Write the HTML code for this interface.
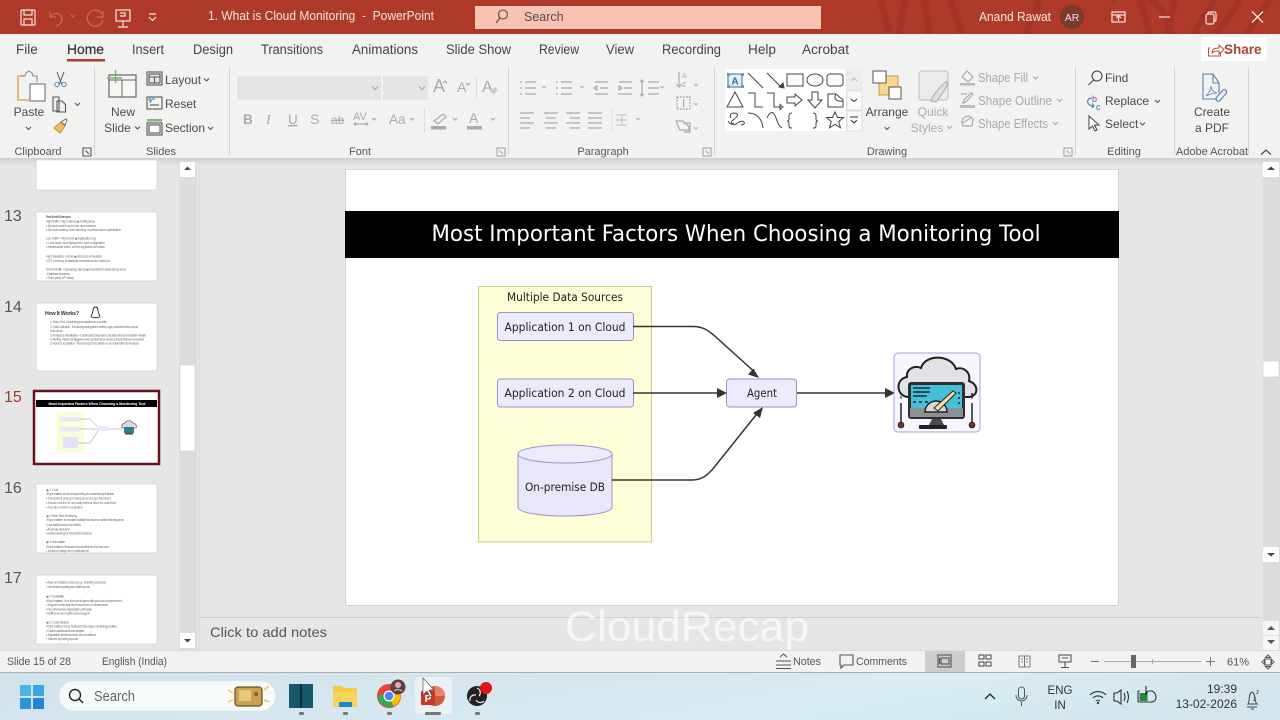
<!DOCTYPE html>
<html><head><meta charset="utf-8"><style>
html,body{margin:0;padding:0;width:1280px;height:720px;overflow:hidden;background:#e6e6e6}
svg{display:block;font-family:"Liberation Sans",sans-serif}
.t{fill:#4a4a4a;font-size:12px}
.tab{fill:#444;font-size:13.5px}
.grp{fill:#555;font-size:11px;text-anchor:middle}
.dis{fill:#aaa;font-size:12.5px}
.ic{fill:none;stroke:#555;stroke-width:1.1}
.icd{fill:none;stroke:#aaa;stroke-width:1.2}
.sh{fill:none;stroke:#444;stroke-width:1}
.d{font-family:"DejaVu Sans",sans-serif;font-size:11.6px;fill:#222;text-anchor:middle}
.th{font-size:3.2px;fill:#777}
.num{font-size:16px;fill:#555}
.wh{fill:none;stroke:#f3e4df;stroke-width:1.2}
</style></head><body>
<svg width="1280" height="720" viewBox="0 0 1280 720" xmlns="http://www.w3.org/2000/svg">
<defs>
<linearGradient id="tb" x1="0" x2="1" y1="0" y2="0.2"><stop offset="0" stop-color="#cfe2ec"/><stop offset=".45" stop-color="#d6e7ef"/><stop offset=".75" stop-color="#d8edf2"/><stop offset="1" stop-color="#d3e6f0"/></linearGradient>
<linearGradient id="shd" x1="0" x2="0" y1="0" y2="1"><stop offset="0" stop-color="#cfcfcf"/><stop offset="1" stop-color="#e6e6e6"/></linearGradient>
</defs>
<rect width="1280" height="720" fill="#e6e6e6"/>
<!-- title bar -->
<rect width="1280" height="34" fill="#b03a2a"/>
<g stroke="#a03324" stroke-width="7" opacity=".75" fill="none">
<path d="M880 0l10 34M905 0l-6 34M925 0l4 34M950 0l12 34M1040 0l-14 34M1140 0l10 34M1175 0l-8 34M1215 0l-22 34M1240 0l-24 34M1270 0l-24 34"/>
<path d="M1110 0a40 40 0 0 1 60 34"/>
</g>
<g class="wh"><rect x="21" y="10" width="14" height="15" rx="1"/><path d="M24 10v5h8v-5M24 25v-6h8v6"/></g>
<g fill="none" stroke="#c9695b" stroke-width="1.3"><path d="M50 11v6h6M50 17c4-6 13-4 12 3-.5 3-3 5-6 6"/><path d="M71 15l2 2 2-2" stroke-width="1"/><path d="M103 11v6h-6M102 14a8 8 0 1 0 1 6"/></g>
<g class="wh"><rect x="116" y="10" width="14" height="11"/><path d="M123 21v5M118 27h10M120 13h5v3h-5"/></g>
<path d="M149 14h7M149 17l3.500 3.500 3.500-3.500" fill="none" stroke="#f3e4df" stroke-width="1.200"/>
<text x="208" y="20" font-size="12.500" fill="#f6e6e2" textLength="226" lengthAdjust="spacingAndGlyphs" xml:space="preserve">1. What is Cloud Monitoring  -  PowerPoint</text>
<rect x="475" y="6" width="346" height="23" fill="#f8c2b4"/>
<circle cx="503" cy="14.500" r="4.500" fill="none" stroke="#553" stroke-width="1.100"/><path d="M500 18l-4 5" stroke="#553" stroke-width="1.200"/>
<text x="524" y="21" font-size="12.500" fill="#5a4a46">Search</text>
<text x="979" y="21" font-size="12.500" fill="#f6e6e2" textLength="72" lengthAdjust="spacingAndGlyphs">Anand Rawat</text>
<circle cx="1072" cy="17" r="12" fill="#7a3a30"/><text x="1072" y="21" font-size="10.500" fill="#f1e0dc" text-anchor="middle">AR</text>
<g class="wh"><rect x="1112" y="12" width="13" height="10"/><path d="M1112 15h13M1118.500 21v-5M1116 18l2.500-2.500 2.500 2.500"/></g>
<path d="M1159 17h11" stroke="#f3e4df" stroke-width="1.200"/>
<g class="wh"><rect x="1206" y="14" width="8" height="10" rx="2"/><path d="M1208 14v-1q0-1 1-1h5q2 0 2 2v6q0 1-2 1"/></g>
<path d="M1252 11.500l11 11M1263 11.500l-11 11" stroke="#f6e8e4" stroke-width="1.300"/>

<!-- ribbon -->
<rect y="34" width="1280" height="126" fill="#f2f3f1"/>
<rect y="158" width="1280" height="8" fill="url(#shd)"/>
<g class="tab">
<text x="16" y="54">File</text>
<text x="67" y="54" fill="#333" stroke="#333" stroke-width=".25" textLength="37" lengthAdjust="spacingAndGlyphs">Home</text>
<text x="132" y="54" textLength="32" lengthAdjust="spacingAndGlyphs">Insert</text>
<text x="193" y="54" textLength="40" lengthAdjust="spacingAndGlyphs">Design</text>
<text x="261" y="54" textLength="62" lengthAdjust="spacingAndGlyphs">Transitions</text>
<text x="352" y="54" textLength="66" lengthAdjust="spacingAndGlyphs">Animations</text>
<text x="446" y="54" textLength="65" lengthAdjust="spacingAndGlyphs">Slide Show</text>
<text x="539" y="54" textLength="40" lengthAdjust="spacingAndGlyphs">Review</text>
<text x="606" y="54" textLength="28" lengthAdjust="spacingAndGlyphs">View</text>
<text x="662" y="54" textLength="59" lengthAdjust="spacingAndGlyphs">Recording</text>
<text x="748" y="54" textLength="28" lengthAdjust="spacingAndGlyphs">Help</text>
<text x="802" y="54" textLength="47" lengthAdjust="spacingAndGlyphs">Acrobat</text>
</g>
<rect x="67" y="59" width="38" height="2.500" fill="#ac3b2a"/>
<rect x="1201" y="37" width="66" height="24" rx="2" fill="#fff"/>
<path d="M1210 48h-1.500v8h12v-4M1212 53c0-4 3-5 7-5v-3l5 4.500-5 4.500v-3c-3 0-5 0-7 2z" fill="none" stroke="#b5513f" stroke-width="1"/>
<text x="1224" y="54" font-size="13.500" font-weight="bold" fill="#a84533">Share</text>

<!-- separators -->
<path d="M94.500 67v88M229.500 67v88M508.500 67v88M714.500 67v88M1075.500 67v88M1174.500 67v88M1248.500 67v88" stroke="#d2d2d0"/>

<!-- Clipboard -->
<path d="M25 76h-7v24h11" fill="none" stroke="#e0ac50" stroke-width="1.500"/>
<path d="M21 76h4l1-3 3-2 3 2 1 3h4v6" fill="#f4f4f2" stroke="#888"/>
<rect x="30" y="84" width="15" height="17" fill="#fff" stroke="#666"/>
<text x="29" y="116" class="t" text-anchor="middle">Paste</text>
<path d="M26 127l2.500 2.500 2.500-2.500" class="ic"/>
<g fill="none" stroke="#555"><path d="M57 72l5 13M64 72l-5 13"/></g>
<g fill="none" stroke="#4b89b8"><circle cx="57" cy="84.500" r="2.200"/><circle cx="64" cy="84.500" r="2.200"/></g>
<g class="ic"><path d="M53 97h6v14h-6zM57 101h5l3.500 3.500v7.500h-8.500z" fill="#f2f3f1"/><path d="M75 103l2.500 2.500 2.500-2.500"/></g>
<path d="M54 128l7-6 4 4-5 7z" fill="#f0bc60" stroke="#d18a25"/>
<path d="M61 122l5-3 1 1-2 5z" fill="#fff" stroke="#555" stroke-width=".8"/>
<text x="38" y="155" class="grp">Clipboard</text>
<path d="M83 148h8v8h-8zM85.500 150.500l3.500 3.500" class="ic" stroke-width=".8"/>

<!-- Slides -->
<rect x="109" y="75" width="27" height="22" fill="#f6f6f4" stroke="#666" stroke-width="1.200"/><path d="M109 80h27M122 80v17" stroke="#666"/>
<path d="M115.500 70v13M107 78h15" stroke="#6fb36f" stroke-width="1.400"/>
<text x="123" y="116" class="t" text-anchor="middle">New</text>
<text x="117.500" y="132" class="t" text-anchor="middle">Slide</text><path d="M135 126.500l2.500 2.500 2.500-2.500" class="ic"/>
<g class="ic"><rect x="147" y="72" width="15" height="13"/><rect x="149" y="74" width="11" height="9" fill="#e6e6e4"/><path d="M149 77h11M154.500 77v6"/>
<rect x="147" y="97" width="15" height="12"/><path d="M150 103a4 4 0 0 1 5-4M151 97l-2 2.500 2.500 2" stroke="#4b89b8"/><path d="M150 105h9"/>
<rect x="147" y="123" width="15" height="12"/><rect x="149" y="125" width="11" height="8" fill="#fff"/></g>
<rect x="147" y="119" width="15" height="2.500" fill="#7fb27f"/>
<text x="165" y="84" class="t">Layout</text><path d="M204 78.500l2.500 2.500 2.500-2.500" class="ic"/>
<text x="165" y="108" class="t">Reset</text>
<text x="165" y="132" class="t">Section</text><path d="M208 127l2.500 2.500 2.500-2.500" class="ic"/>
<text x="161" y="155" class="grp">Slides</text>

<!-- Font -->
<rect x="237" y="76" width="144" height="24" fill="#e4e4e2"/><rect x="383" y="76" width="45" height="24" fill="#e4e4e2"/><rect x="381" y="76" width="2" height="24" fill="#f2f3f1"/>
<path d="M372 86.500l3 3 3-3M419 86.500l3 3 3-3" class="icd"/>
<g font-size="14" fill="#aaa">
<text x="433" y="92" font-size="18">A</text><path d="M443 83l2-2 2 2" class="icd" stroke-width=".8"/>
<text x="457" y="92" font-size="14">A</text><path d="M466 83l2 2 2-2" class="icd" stroke-width=".8"/>
<path d="M476.500 76v22" stroke="#ddd"/>
<text x="482" y="92" font-size="16">A</text><path d="M490 92l5-5 3 3-4 4z" fill="#ccc"/>
<text x="243" y="124" font-weight="bold" font-size="13.500">B</text>
<text x="266" y="124" font-style="italic" font-family="Liberation Serif" font-size="14">I</text>
<text x="288" y="124" font-size="13.500" text-decoration="underline">U</text>
<text x="310" y="124" font-size="14">S</text>
<text x="331" y="124" font-size="12" text-decoration="line-through">ab</text>
<text x="353" y="120" font-size="11">AV</text><path d="M354 124h14M354 124l2-1.500M354 124l2 1.500M368 124l-2-1.500M368 124l-2 1.500" class="icd" stroke-width=".7"/><path d="M372 118l2 2 2-2" class="icd" stroke-width=".9"/>
<text x="389" y="124" font-size="13.500">Aa</text><path d="M410 118l2 2 2-2" class="icd" stroke-width=".9"/>
</g>
<path d="M424.500 108v24" stroke="#ddd"/>
<path d="M434 121l9-7 3 3-8 7z" class="icd"/><rect x="431" y="126" width="15" height="3.500" fill="#aaa"/><path d="M453 118l2 2 2-2M491 118l2 2 2-2" class="icd" stroke-width=".9"/>
<text x="469" y="123" font-size="14" fill="#aaa">A</text><rect x="467" y="126" width="15" height="3.500" fill="#aaa"/>
<text x="360" y="155" class="grp">Font</text>
<path d="M497 148h8v8h-8zM499.500 150.500l3.500 3.500" class="icd" stroke-width=".8"/>

<!-- Paragraph -->
<g class="icd">
<path d="M525 82h11M525 88h11M525 94h11M520 82h2M520 88h2M520 94h2"/><path d="M542 86l2 2 2-2M580 86l2 2 2-2M660 86l2 2 2-2M694 84l2 2 2-2M694 103l2 2 2-2M694 127l2 2 2-2" stroke-width=".9"/>
<path d="M561 82h11M561 88h11M561 94h11M556 82h2M556 88h2M556 94h2"/>
<path d="M595 82h13M600 88h8M595 94h13M594 88l3-2v4z"/><path d="M619 82h13M624 88h8M618 94h14M622 88l-3-2v4z"/>
<path d="M648 82h11M648 88h11M648 94h11M642 80v16M640 82l2-2 2 2M640 94l2 2 2-2"/>
<path d="M520 113h14M520 118h10M520 123h14M520 128h10"/><path d="M544 113h14M546 118h10M544 123h14M546 128h10"/><path d="M566 113h14M570 118h10M566 123h14M570 128h10"/><path d="M588 113h14M588 118h14M588 123h14M588 128h14"/>
<path d="M616 115h11M616 120h11M616 125h11M622 115v10" stroke-width=".8"/><path d="M636 118l2 2 2-2" stroke-width=".9"/>
<path d="M679 72v15M676 84l3 3 3-3"/>
<rect x="677" y="97" width="13" height="12" stroke-dasharray="2 1"/><path d="M683.500 99v8"/>
<path d="M676 121h7l6 6v3h-9zM683 123h7v9h-6"/>
</g>
<text x="682" y="78" font-size="7" fill="#aaa">A</text><text x="682" y="87" font-size="7" fill="#aaa">Z</text>
<path d="M612 109v22" stroke="#ddd"/>
<text x="603" y="155" class="grp">Paragraph</text>
<path d="M703 148h8v8h-8zM705.500 150.500l3.500 3.500" class="icd" stroke-width=".8"/>

<!-- Shapes gallery -->
<rect x="725" y="69" width="137" height="62" fill="#e8e8e6"/>
<rect x="725" y="69" width="121" height="62" fill="#fff"/>
<rect x="847" y="69" width="15" height="21" fill="#ececea"/><rect x="847" y="91" width="15" height="19" fill="#fafafa" stroke="#ccc" stroke-width=".5"/><rect x="847" y="111" width="15" height="20" fill="#fafafa" stroke="#ccc" stroke-width=".5"/>
<path d="M851 81l3-3 3 3" fill="none" stroke="#bbb"/><path d="M851 99l3 2.500 3-2.500" fill="none" stroke="#333"/><path d="M850 117h8M851 120l3 3 3-3" fill="none" stroke="#333"/>
<rect x="728" y="74" width="14" height="13" fill="#e3eef5" stroke="#2f6f95"/><g fill="#5ba0c4"><rect x="727" y="73" width="3" height="3"/><rect x="741" y="73" width="3" height="3"/><rect x="727" y="85" width="3" height="3"/><rect x="741" y="85" width="3" height="3"/></g><text x="735" y="84.500" font-size="10" fill="#2f6f95" font-weight="bold" text-anchor="middle">A</text>
<g class="sh">
<path d="M748 73l15 15M767 73l15 15"/><path d="M784 88l-1-5-4 4z" fill="#444"/>
<rect x="787" y="74" width="16" height="12"/><ellipse cx="815" cy="80" rx="8" ry="6"/><rect x="827" y="74" width="16" height="12" rx="3"/>
<path d="M735 92l8 15h-16z"/>
<path d="M748 93h7v14h8M767 93h7v14h7M783 107l-3-2.500v5z"/>
<path d="M787 97h8v-3l7 6-7 6v-3h-8z"/><path d="M812 92h6v8h4l-7 8-7-8h4z"/>
<path d="M828 94h8l7 6v7h-15z"/><path d="M836 94c-3 5 1 8 7 7"/>
<path d="M731 118c-3-5 4-6 6-4s-3 5-5 7 1 5 4 3 6-4 8-2-3 3-3 3M728 121c2 3 4 4 6 2"/>
<path d="M748 113c8 0 14 5 15 15M767 118c2-5 5-7 7-4 3 4 3 11 8 14"/>
<path d="M792 113c-2 0-3 1-3 3v3c0 2-1 2-2 2 1 0 2 1 2 3v2c0 2 1 2 3 2"/>
<path d="M813 113c2 0 3 1 3 3v3c0 2 1 2 2 2-1 0-2 1-2 3v2c0 2-1 2-3 2"/>
<path d="M835 112l2.500 5.500h6l-4.800 4 1.800 6.300-5.500-3.500-5.500 3.500 1.800-6.300-4.800-4h6z"/>
</g>

<!-- Arrange -->
<rect x="879" y="76" width="19" height="19" fill="#f7d88f" stroke="#c99a3b"/>
<rect x="873" y="71" width="13" height="12" fill="#fff" stroke="#555"/><rect x="889" y="87" width="12" height="12" fill="#fff" stroke="#555"/>
<text x="887" y="116" class="t" text-anchor="middle">Arrange</text><path d="M884.500 127l2.500 2.500 2.500-2.500" class="ic"/>
<rect x="919" y="71" width="29" height="29" rx="3" fill="#ebebe9" stroke="#bbb"/><path d="M931 101c1-5 9-15 15-19l2 1c-2 6-8 14-12 19z" fill="#ddd" stroke="#aaa"/>
<text x="933" y="116" class="t" text-anchor="middle" style="fill:#aaa">Quick</text>
<text x="927" y="132" class="t" text-anchor="middle" style="fill:#aaa">Styles</text><path d="M947 126l2.500 2.500 2.500-2.500" class="icd" stroke-width=".9"/>
<g class="dis">
<text x="978" y="82" textLength="50" lengthAdjust="spacingAndGlyphs">Shape Fill</text>
<text x="978" y="105" textLength="74" lengthAdjust="spacingAndGlyphs">Shape Outline</text>
<text x="978" y="128" textLength="70" lengthAdjust="spacingAndGlyphs">Shape Effects</text>
</g>
<path d="M1033 76.500l2.500 2.500 2.500-2.500M1057 99l2.500 2.500 2.500-2.500M1053 122l2.500 2.500 2.500-2.500" class="icd" stroke-width=".9"/>
<g class="icd"><path d="M967 71l6 6-5 5-6-5z"/><path d="M973 94l-7 8-3 1 1-3 7-7zM961 94h6"/><path d="M962 123a6 6 0 0 1 11-4l-1 7h-9zM963 123l9-6"/></g>
<rect x="960" y="83" width="15" height="2.500" fill="#bbb"/><rect x="960" y="105" width="15" height="3" fill="#bbb"/>
<text x="887" y="155" class="grp">Drawing</text>
<path d="M1064 148h8v8h-8zM1066.500 150.500l3.500 3.500" class="icd" stroke-width=".8"/>

<!-- Editing -->
<g fill="none" stroke="#444" stroke-width="1.100"><circle cx="1097" cy="76" r="5"/><path d="M1093.500 80l-5 5"/></g>
<text x="1105" y="82" class="t">Find</text>
<text x="1092" y="102" font-size="9" fill="#a0449a">b</text><text x="1096" y="110" font-size="9" fill="#2d76a8">c</text><path d="M1092 98c-4 0-5 3-4 5s3 3 5 3M1092 103.500l2 2.500-2 2" fill="none" stroke="#2d76a8"/>
<text x="1105" y="105" class="t">Replace</text><path d="M1155 100l2.500 2.500 2.500-2.500" class="ic"/>
<path d="M1089 116l0 13 3.500-3 2.500 5 2-1-2.500-5 4.500 0z" fill="#fff" stroke="#444"/>
<text x="1105" y="128" class="t">Select</text><path d="M1140 122.500l2.500 2.500 2.500-2.500" class="ic"/>
<text x="1124" y="155" class="grp">Editing</text>

<!-- Acrobat -->
<g fill="none" stroke="#5a7fb0" stroke-width="1.100"><path d="M1219 93v-10l-6-9h-10v25h14"/><path d="M1213 74v9h6"/><path d="M1206 96c3-3 5-6 5-10 0 3 2 6 6 7-3 0-7 1-11 3z" stroke-width=".8"/><path d="M1216 98l7-8a2.500 2.500 0 0 1 3.500 3l-7 8a2.500 2.500 0 0 1-3.500-3z"/></g>
<text x="1212" y="116" class="t" text-anchor="middle">Create</text>
<text x="1212" y="132" class="t" text-anchor="middle">a PDF</text>
<text x="1212" y="155" class="grp">Adobe Acrobat</text>
<path d="M1261 154.500l5-4.500 5 4.500" fill="none" stroke="#444" stroke-width="1.200"/>

<!-- left panel -->
<rect x="179" y="166" width="18" height="484" fill="#dcdcdc"/>
<rect x="180" y="162" width="15" height="15" fill="#fff"/><path d="M184 170h7l-3.500-3.500z" fill="#444"/>
<rect x="180" y="365" width="15" height="86" fill="#fff" stroke="#ccc" stroke-width=".5"/>
<rect x="180" y="633" width="15" height="15" fill="#fff"/><path d="M184 639h7l-3.500 3.500z" fill="#444"/>
<path d="M199 166v484" stroke="#d8d8d8"/>
<g fill="#fff" stroke="#d0d0d0" stroke-width=".7">
<rect x="36" y="160" width="121" height="30"/>
<rect x="36" y="212" width="121" height="69"/>
<rect x="36" y="303" width="121" height="68"/>
<rect x="36" y="484" width="121" height="69"/>
<rect x="36" y="575" width="121" height="69"/>
</g>
<text x="4" y="221" class="num">13</text>
<text x="4" y="312" class="num">14</text>
<text x="4" y="402" class="num" style="fill:#a8372a">15</text>
<text x="4" y="493" class="num">16</text>
<text x="4" y="583" class="num">17</text>
<g class="th">
<text x="46" y="218" font-weight="bold" textLength="25">Real World Examples</text>
<text x="46" y="222.500" textLength="49">High Traffic + High Latency  ▣  Scaling issue</text>
<text x="46" y="227" textLength="50">▪ Spread current load to the new instance</text>
<text x="46" y="231" textLength="75">▪ Add auto scaling, load balancing, or performance optimization</text>
<text x="46" y="239.500" textLength="50">Low Traffic + High Errors  ▣  Application bug</text>
<text x="46" y="244" textLength="59">▪ Code issue, bad deployment, bad configuration</text>
<text x="46" y="248" textLength="59">▪ Infrastructure is fine, but the application is broken</text>
<text x="46" y="257.500" textLength="56">High Saturation + Errors  ▣  Resource exhaustion</text>
<text x="46" y="262" textLength="64">▪ CPU, memory, or database connections are maxed out</text>
<text x="46" y="270.500" textLength="80">Normal Traffic + Increasing Latency  ▣  Downstream dependency issue</text>
<text x="46" y="275" textLength="24">▪ Database slowness</text>
<text x="46" y="279" textLength="28">▪ Third-party API delay</text>
<text x="45" y="315" font-size="5.200" font-weight="bold" style="fill:#333" textLength="34">How It Works?</text>
<text x="50" y="323" textLength="57">1. Setup Tool  -  Monitoring tool installed on your infra</text>
<text x="50" y="328" textLength="88">2. Data Collection  -  Monitoring tools gather metrics, logs, and traces from cloud</text>
<text x="50" y="332" textLength="13">resources</text>
<text x="50" y="336.500" textLength="96">3. Analysis &amp; Visualization  -  Dashboards help teams visualize trends and system health</text>
<text x="50" y="340.500" textLength="94">4. Alerting  -  Alerts are triggered when performance drops or thresholds are exceeded</text>
<text x="50" y="344.500" textLength="89">5. Action &amp; Escalation  -  Teams respond to alerts or use automation to fix issues</text>
<text x="46" y="491" textLength="12">▣ 1. Cost</text>
<text x="46" y="495" textLength="68">Why it matters: Avoid overspending on unnecessary features</text>
<text x="46" y="499.500" textLength="65">▪ Transparent pricing model (pay as you go, freemium)</text>
<text x="46" y="504" textLength="70">▪ Ensure that tool is not costly without need for overhead</text>
<text x="46" y="508.500" textLength="37">▪ Free tier or trial for evaluation</text>
<text x="46" y="517" textLength="31">▣ 2. Real-Time Monitoring</text>
<text x="46" y="521" textLength="78">Why it matters: Immediate visibility into issues enables fast response</text>
<text x="46" y="526" textLength="35">▪ Live dashboards and metrics</text>
<text x="46" y="530.500" textLength="24">▪ Anomaly detection</text>
<text x="46" y="534.500" textLength="46">▪ Instant alerting for threshold breaches</text>
<text x="46" y="543" textLength="19">▣ 3. Automation</text>
<text x="46" y="548" textLength="63">Why it matters: Reduces manual effort and human error</text>
<text x="46" y="552" textLength="43">▪ Incident triage and notifications</text>
<text x="46" y="583.500" textLength="60">▪ Auto-remediation actions (e.g., restarting services)</text>
<text x="46" y="588" textLength="44">▪ Scheduled reporting and data exports</text>
<text x="46" y="597.500" textLength="18">▣ 4. Scalability</text>
<text x="46" y="602" textLength="76">Why it matters: Your tool should grow with your cloud environment</text>
<text x="46" y="606" textLength="62">▪ Support for thousands of resources or infrastructure</text>
<text x="46" y="610.500" textLength="46">▪ No performance degradation with scale</text>
<text x="46" y="614.500" textLength="44">▪ Multi-cloud and hybrid-cloud support</text>
<text x="46" y="623.500" textLength="23">▣ 5. Customization</text>
<text x="46" y="627.500" textLength="71">Why it matters: Every business has unique monitoring priorities</text>
<text x="46" y="632" textLength="38">▪ Custom dashboards and widgets</text>
<text x="46" y="636" textLength="50">▪ Adjustable alert thresholds and conditions</text>
<text x="46" y="640" textLength="32">▪ Tailored reporting layouts</text>
</g>
<!-- penguin -->
<path d="M95.500 307c-2 0-2.500 2-2.500 4l-2 6c2 1 7 1 9 0l-2-6c0-2-.5-4-2.500-4z" fill="#fff" stroke="#222" stroke-width=".9"/><path d="M91 317h3M97 317h3" stroke="#caa23a"/>
<!-- 15 -->
<rect x="34" y="391" width="125" height="73" fill="#fff" stroke="#6b1020" stroke-width="2.500"/>
<rect x="36" y="400" width="121" height="7" fill="#000"/>
<text x="97" y="405" font-size="3.600" font-weight="bold" fill="#fff" text-anchor="middle" textLength="97">Most Important Factors When Choosing a Monitoring Tool</text>
<rect x="57" y="412" width="27" height="40" fill="#fbfcd8"/>
<rect x="60" y="417" width="20" height="4.500" fill="#e9e8fb"/><rect x="60" y="427" width="20" height="4.500" fill="#e9e8fb"/><rect x="63" y="437" width="15" height="11" fill="#e3e2f7"/>
<path d="M80 419h10l8 8M80 429h17M78 443h12l8-12M108 429h14" fill="none" stroke="#888" stroke-width=".5"/>
<rect x="97" y="426" width="11" height="5" fill="#e9e8fb"/>
<path d="M122 428c-1-4 2-5 3-5 1-3 7-3 8 0 3 0 4 3 3 5z" fill="#d9d9de" stroke="#444" stroke-width=".6"/><rect x="124" y="427" width="10" height="6" fill="#2d7e8e"/><rect x="125" y="433" width="8" height="1.500" fill="#444"/>

<!-- right scroll -->
<rect x="1263" y="166" width="17" height="485" fill="#dcdcdc"/>
<rect x="1263" y="162" width="16" height="15" fill="#fff"/><path d="M1267 170h8l-4-3.500z" fill="#444"/>
<rect x="1263" y="361" width="16" height="16" fill="#fff" stroke="#ccc" stroke-width=".5"/>
<rect x="1263" y="547" width="16" height="15" fill="#fff"/><path d="M1267 553h8l-4 3.500z" fill="#444"/>
<rect x="1263" y="621" width="16" height="14" fill="#f6f6f6"/><path d="M1267 630h8l-4-4z" fill="#555"/>
<rect x="1263" y="636" width="16" height="14" fill="#f6f6f6"/><path d="M1267 640h8l-4 4z" fill="#555"/>

<!-- slide -->
<rect x="345.500" y="169.500" width="773" height="436" fill="#fff" stroke="#d4d4d4"/>
<rect x="345" y="211" width="774" height="47" fill="#000"/>
<text x="736" y="241" font-size="22.500" fill="#fff" text-anchor="middle" textLength="609" lengthAdjust="spacingAndGlyphs" font-family="DejaVu Sans">Most Important Factors When Choosing a Monitoring Tool</text>

<!-- diagram -->
<rect x="478.500" y="286.500" width="173" height="255.500" fill="#fdfed8" stroke="#c8cf8c"/>
<text x="565" y="301" class="d" textLength="116" lengthAdjust="spacingAndGlyphs">Multiple Data Sources</text>
<g fill="#ecebfd" stroke="#9c92c6" stroke-width="1">
<rect x="497.500" y="312.500" width="136" height="28" rx="3"/>
<rect x="497.500" y="379" width="136" height="28" rx="3"/>
<rect x="726.500" y="379" width="70" height="28" rx="3"/>
<path d="M518 454c0-6 94-6 94 0v53c0 12-94 12-94 0z" fill="#e8e7fa"/>
<ellipse cx="565" cy="454" rx="47" ry="9" fill="#ecebfd"/>
</g>
<text x="565" y="331" class="d" textLength="121" lengthAdjust="spacingAndGlyphs">Application 1 on Cloud</text>
<text x="565" y="397" class="d" textLength="121" lengthAdjust="spacingAndGlyphs">Application 2 on Cloud</text>
<text x="762" y="397" class="d" textLength="30" lengthAdjust="spacingAndGlyphs">Agent</text>
<text x="565" y="491" class="d" textLength="80" lengthAdjust="spacingAndGlyphs">On-premise DB</text>
<g fill="none" stroke="#333" stroke-width="1.500">
<path d="M633 326.500h60c10 0 15 4 20 8l40 36"/>
<path d="M633 393h86"/>
<path d="M612 480h80c10 0 15-5 20-10l44-55"/>
<path d="M797 393h91"/>
</g>
<g fill="#333">
<path d="M759 378l-11 -3.500 5.500-6z"/>
<path d="M727 393l-10-5v10z"/>
<path d="M763 407l-3 11-7-5z"/>
<path d="M895 393l-10-5v10z"/>
</g>
<!-- monitor icon -->
<rect x="894" y="353" width="86" height="79" rx="4" fill="#f7f6ff" stroke="#a9a1d4"/>
<path d="M908 397c-12-1-13-18-1-20-1-9 9-12 14-9 4-14 30-14 35 1 7-3 15 3 13 12 10 3 10 16-1 16z" fill="#e2e2e6" stroke="#1f1f1f" stroke-width="2"/>
<rect x="908" y="382" width="57" height="37" rx="3" fill="#2f2f33"/>
<rect x="911" y="385" width="51" height="23" fill="#45c0d8"/>
<rect x="910" y="408" width="53" height="9" fill="#8d8f95"/>
<path d="M929 425l3-6h9l3 6z" fill="#4a4a50"/><rect x="919" y="425" width="28" height="4" rx="1" fill="#222"/>
<path d="M913 388h17M913 392h17M913 396h14M913 402h3M919 402h3M925 402h3" stroke="#1f2a30" stroke-width="1.500"/>
<path d="M925 412a11 11 0 0 1 22 0z" fill="#d8d8dc" stroke="#222" stroke-width="1.500"/>
<path d="M934 408l19-17 3 2-18 18z" fill="#f6dca0" stroke="#222"/>
<path d="M959 392v2M959 397v2M959 402v2" stroke="#222" stroke-width="1.500"/>
<path d="M901 393v7M972 393v7" stroke="#222" stroke-width="1.500" stroke-dasharray="2 1.500"/>
<path d="M901 403v19M972 403v19" stroke="#222" stroke-width="1.500"/>
<circle cx="901" cy="425" r="2.800" fill="#8a2a2a" stroke="#222"/><circle cx="972" cy="425" r="2.800" fill="#8a2a2a" stroke="#222"/>

<!-- notes -->
<path d="M200 617.500H1262" stroke="#cfcfcf"/>
<text x="210" y="637" font-size="14" fill="#555" textLength="117" lengthAdjust="spacingAndGlyphs">Click to add notes</text>
<text x="565" y="641" font-size="43" fill="#fff" fill-opacity=".62" textLength="244" lengthAdjust="spacingAndGlyphs">CloudRecap</text>

<!-- status bar -->
<rect y="651" width="1280" height="21" fill="#f2f3f1"/>
<path d="M0 650.500H1280" stroke="#d9d9d9"/><path d="M0 672.500H1280" stroke="#aab0b2"/>
<text x="7" y="665" font-size="11" fill="#555" textLength="64" lengthAdjust="spacingAndGlyphs">Slide 15 of 28</text>
<text x="102" y="665" font-size="11" fill="#555" textLength="65" lengthAdjust="spacingAndGlyphs">English (India)</text>
<g class="ic"><path d="M776 661h15M776 665h15M776 668.500h15M780 657l3.500-3 3.500 3"/></g>
<text x="793" y="665" font-size="11" fill="#555" textLength="28" lengthAdjust="spacingAndGlyphs">Notes</text>
<path d="M840 655h13v10h-9l-3 3v-3h-1z" class="ic"/>
<text x="856" y="665" font-size="11" fill="#555" textLength="51" lengthAdjust="spacingAndGlyphs">Comments</text>
<rect x="925" y="651" width="40" height="21" fill="#cdcdcb"/>
<g class="ic"><rect x="938" y="655" width="13" height="12"/><rect x="941" y="658" width="8" height="6"/><path d="M939.500 658v6"/>
<rect x="979" y="655" width="5" height="4"/><rect x="986" y="655" width="5" height="4"/><rect x="979" y="662" width="5" height="4"/><rect x="986" y="662" width="5" height="4"/>
<path d="M1019 656h11v11h-11zM1024.500 656v11M1021 659h2M1021 662h2M1026 659h2M1026 662h2" stroke-width=".8"/>
<rect x="1059" y="655" width="12" height="7"/><path d="M1065 662v5M1061 667.500h8M1062 658h6"/></g>
<path d="M1091 661.500h8M1206 661.500h9M1210.500 657v9" stroke="#777"/>
<path d="M1104 661.500h97" stroke="#aaa"/><path d="M1152.500 659v5" stroke="#aaa"/>
<rect x="1131" y="655" width="5" height="13" fill="#666"/>
<text x="1227" y="665.500" font-size="11" fill="#555">61%</text>
<path d="M1268 655l-2.500 2.500h5zM1268 669l-2.500-2.500h5zM1262 662l2.500-2.500v5zM1274 662l-2.500-2.500v5z" fill="none" stroke="#555"/><rect x="1265" y="659" width="6" height="6" fill="none" stroke="#555"/>

<!-- taskbar -->
<rect y="673" width="1280" height="47" fill="url(#tb)"/>
<rect x="20" y="685" width="11" height="11" fill="#4bb5ea"/><rect x="33" y="685" width="11" height="11" fill="#3aa6e3"/><rect x="20" y="698" width="11" height="11" fill="#2c93dc"/><rect x="33" y="698" width="11" height="11" fill="#1f85d4"/>
<rect x="59" y="681" width="217" height="30" rx="15" fill="#f7fafb" stroke="#dde5e8"/>
<circle cx="75" cy="695" r="5.500" fill="none" stroke="#222" stroke-width="1.400"/><path d="M79 699l4 4" stroke="#222" stroke-width="1.500"/>
<text x="94" y="701" font-size="14.500" fill="#666" textLength="41" lengthAdjust="spacingAndGlyphs">Search</text>
<rect x="235" y="687" width="27" height="19" rx="3" fill="#c9a24f" stroke="#6b4f1d" stroke-width="1.200"/><rect x="239" y="690" width="12" height="11" fill="#e4c87c"/><path d="M228 690l5 3M228 702l5-2M264 690l5-4M264 700l5 2" stroke="#e5d25c" stroke-width="1.500"/><circle cx="256" cy="694" r="2" fill="#7d5f28"/>
<rect x="289" y="684" width="24" height="24" fill="#14586a"/><rect x="300" y="684" width="2" height="24" fill="#0c2e3c"/>
<path d="M333 693v-6q0-1 1-1h8l2 2h13v19h-24z" fill="#f5cc45"/><rect x="333" y="692" width="24" height="15" fill="#f7d558"/><rect x="339" y="702" width="13" height="5" rx="1" fill="#1c86cf"/>
<circle cx="389" cy="696" r="12" fill="#ea4335"/><path d="M389 696l10.400-6a12 12 0 0 1-6 16.400z" fill="#fbbc05"/><path d="M389 696l4.400 10.400a12 12 0 0 1-16-11l5-1z" fill="#34a853"/><circle cx="389" cy="696" r="5.500" fill="#fff"/><circle cx="389" cy="696" r="4.300" fill="#4285f4"/>
<circle cx="398" cy="687" r="7.500" fill="#5e3e47"/><circle cx="398" cy="685" r="3" fill="#ddb3a8"/><path d="M394 691q4-3 8 0" stroke="#e7cfd5" fill="none"/>
<rect x="415" y="677" width="37" height="37" rx="3" fill="#eaf0f3"/>
<circle cx="435" cy="696" r="10" fill="#cf5a40"/><path d="M435 686a10 10 0 0 1 10 10h-10z" fill="#e8836a"/><rect x="421" y="691" width="14" height="14" rx="1" fill="#c4391f"/><text x="428" y="702" font-size="10" font-weight="bold" fill="#fff" text-anchor="middle">P</text>
<path d="M423 678v17l4-4 3 6 2-1-3-6h5z" fill="#fff" stroke="#555" stroke-width=".7"/>
<circle cx="477" cy="696" r="10" fill="#222"/><path d="M477 688a5 5 0 0 1 2 8M470 701a5 5 0 0 1 6-6M484 701a5 5 0 0 1-8-1" fill="none" stroke="#eee" stroke-width="1.200"/>
<circle cx="486" cy="688" r="6" fill="#e21212"/>
<g fill="#777"><rect x="299" y="712" width="5" height="3" rx="1"/><rect x="343" y="712" width="5" height="3" rx="1"/><rect x="387" y="712" width="5" height="3" rx="1"/><rect x="425" y="712" width="16" height="3" rx="1"/><rect x="475" y="712" width="5" height="3" rx="1"/></g>
<!-- tray -->
<path d="M985 699l5-5 5 5" fill="none" stroke="#222" stroke-width="1.300"/>
<rect x="1018.500" y="687" width="6" height="12" rx="3" fill="none" stroke="#555"/><path d="M1016 695c0 8 11 8 11 0M1021.500 702v4" fill="none" stroke="#555"/>
<text x="1060" y="694" font-size="11.500" fill="#333" text-anchor="middle">ENG</text>
<text x="1060" y="709" font-size="11.500" fill="#333" text-anchor="middle">IN</text>
<g fill="none" stroke="#333" stroke-width="1.100"><path d="M1090 695a11 11 0 0 1 16 0M1093 698a7 7 0 0 1 10 0M1096 701a3 3 0 0 1 4 0"/><path d="M1114 693h3l4-3v14l-4-3h-3zM1124 693q2 4 0 8M1127 691q3 6 0 12"/><path d="M1140 691h-1q-1 0-1 1v9q0 1 1 1h13q4-1 4-5t-4-6h-4"/></g>
<circle cx="1098" cy="703" r="1.200" fill="#333"/>
<rect x="1139.500" y="693" width="8" height="8" fill="#1f8a3d"/><path d="M1146 686v8l2-3" stroke="#111" fill="none"/>
<text x="1237" y="693" font-size="12" fill="#333" text-anchor="end">19:39</text>
<text x="1237" y="708" font-size="12" fill="#333" text-anchor="end">13-02-2026</text>
<path d="M1247 707h10M1248 704c2-2 0-10 4-12 4 1 2 10 5 12zM1251 709h3" fill="none" stroke="#444"/><text x="1253" y="701" font-size="6.500" fill="#333">z</text><text x="1256" y="694" font-size="6.500" fill="#333">z</text>
</svg>
</body></html>
